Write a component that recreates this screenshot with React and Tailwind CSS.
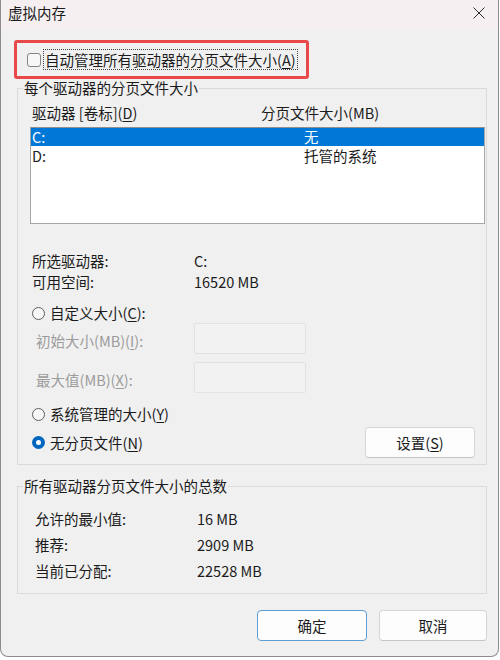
import React from "react";

const Key = ({ children }) => <u className="underline underline-offset-2 decoration-1">{children}</u>;

const Radio = ({ checked }) =>
  checked ? (
    <span className="w-[13px] h-[13px] rounded-full bg-[#0067c0] flex items-center justify-center shrink-0">
      <span className="w-[5px] h-[5px] rounded-full bg-white"></span>
    </span>
  ) : (
    <span className="w-[13px] h-[13px] rounded-full border border-[#5f5f5f] bg-[#f6f6f6] shrink-0"></span>
  );

const WinButton = ({ children, primary, className = "" }) => (
  <button
    className={
      "h-[31px] bg-[#fdfdfd] rounded-[4px] border text-[14.5px] text-[#1b1b1b] " +
      (primary ? "border-[#5d9ed6] " : "border-[#d6d6d6] border-b-[#c4c4c4] ") +
      className
    }
  >
    {children}
  </button>
);

const App = () => {
  return (
    <div
      className="w-[500px] h-[660px] bg-white overflow-hidden text-[14.5px] text-[#1b1b1b]"
      style={{ fontFamily: '"Noto Sans CJK SC", "Noto Sans", sans-serif' }}
    >
      <div className="w-[499px] h-[657px] bg-[#f0f0f0] border-r border-b border-l border-[#8c8c8c] rounded-b-[8px] flex flex-col">
        {/* title bar */}
        <div className="h-[30px] bg-[#f5eff1] flex items-center justify-between pl-[7px] pr-[13px] shrink-0">
          <span className="leading-[20px] -mt-[4px]">虚拟内存</span>
          <svg width="12" height="12" viewBox="0 0 12 12" className="-mt-[4px]">
            <path d="M0.5 0.5 L11.5 11.5 M11.5 0.5 L0.5 11.5" stroke="#2b2b2b" strokeWidth="1" fill="none" />
          </svg>
        </div>

        {/* auto manage */}
        <div className="mt-[10px] ml-[13px] w-[295px] h-[39px] border-[3px] border-[#e8484a] rounded-[3px] flex items-center pl-[10px] shrink-0">
          <span className="w-[14px] h-[14px] rounded-[3px] border border-[#858585] bg-[#f7f7f7]"></span>
          <span className="ml-[2px] px-[1px] leading-[19px] border border-dotted border-[#444]">
            自动管理所有驱动器的分页文件大小(<Key>A</Key>)
          </span>
        </div>

        {/* per drive */}
        <fieldset className="ml-[16px] w-[470px] border border-[#dadada] pl-[12px] pr-[1px] pb-[6px] shrink-0">
          <legend className="-ml-[7px] px-[1px] leading-[18px]">每个驱动器的分页文件大小</legend>
          <div className="mt-[6px] flex leading-[20px] pl-[2px]">
            <span className="w-[229px]">
              驱动器 [卷标](<Key>D</Key>)
            </span>
            <span>分页文件大小(MB)</span>
          </div>
          <div className="mt-[4px] h-[97px] bg-white border border-[#a6a6a6] border-t-[#8f8f8f]">
            <div className="h-[18px] bg-[#0078d7] text-white flex items-center pl-[1px] leading-[18px]">
              <span className="w-[272px]">C:</span>
              <span>无</span>
            </div>
            <div className="h-[19px] flex items-center pl-[1px] leading-[19px]">
              <span className="w-[272px]">D:</span>
              <span>托管的系统</span>
            </div>
          </div>

          <div className="mt-[26px] pl-[2px] leading-[21px]">
            <div className="flex">
              <span className="w-[162px]">所选驱动器:</span>
              <span>C:</span>
            </div>
            <div className="flex">
              <span className="w-[162px]">可用空间:</span>
              <span>16520 MB</span>
            </div>
          </div>

          <div className="mt-[11px] pl-[2px] flex items-center gap-[5px] leading-[20px]">
            <Radio />
            <span>
              自定义大小(<Key>C</Key>):
            </span>
          </div>
          <div className="pl-[6px] flex items-center text-[#9c9c9c]">
            <span className="w-[158px] mt-[4px]">
              初始大小(MB)(<Key>I</Key>):
            </span>
            <div className="w-[112px] h-[31px] border border-[#e2e2e2] bg-[#f2f2f2] rounded-[2px]"></div>
          </div>
          <div className="mt-[8px] pl-[6px] flex items-center text-[#9c9c9c]">
            <span className="w-[158px] mt-[4px]">
              最大值(MB)(<Key>X</Key>):
            </span>
            <div className="w-[112px] h-[31px] border border-[#e2e2e2] bg-[#f2f2f2] rounded-[2px]"></div>
          </div>

          <div className="mt-[11px] pl-[2px] flex items-center gap-[5px] leading-[20px]">
            <Radio />
            <span>
              系统管理的大小(<Key>Y</Key>)
            </span>
          </div>
          <div className="mt-[3px] pl-[2px] flex items-center justify-between pr-[10px]">
            <div className="flex items-center gap-[5px] leading-[20px]">
              <Radio checked />
              <span>
                无分页文件(<Key>N</Key>)
              </span>
            </div>
            <WinButton className="w-[110px]">
              设置(<Key>S</Key>)
            </WinButton>
          </div>
        </fieldset>

        {/* totals */}
        <fieldset className="mt-[12px] ml-[16px] w-[470px] border border-[#dadada] pl-[17px] pb-[9px] shrink-0">
          <legend className="-ml-[12px] px-[1px] leading-[18px]">所有驱动器分页文件大小的总数</legend>
          <div className="mt-[11px] leading-[26px]">
            <div className="flex">
              <span className="w-[162px]">允许的最小值:</span>
              <span>16 MB</span>
            </div>
            <div className="flex">
              <span className="w-[162px]">推荐:</span>
              <span>2909 MB</span>
            </div>
            <div className="flex">
              <span className="w-[162px]">当前已分配:</span>
              <span>22528 MB</span>
            </div>
          </div>
        </fieldset>

        <div className="mt-[16px] flex justify-end gap-[12px] pr-[11px]">
          <WinButton primary className="w-[110px]">
            确定
          </WinButton>
          <WinButton className="w-[108px]">取消</WinButton>
        </div>
      </div>
    </div>
  );
};

export default App;
